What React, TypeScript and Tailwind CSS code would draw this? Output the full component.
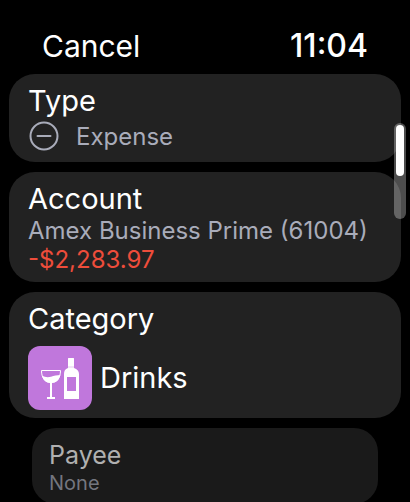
import type { ReactNode } from "react";

type FieldCardProps = {
  title: string;
  children: ReactNode;
};

function FieldCard({ title, children }: FieldCardProps) {
  return (
    <button
      type="button"
      className="block w-full rounded-[26px] bg-[#222222] px-[19px] pt-[10px] pb-2 text-left"
    >
      <span className="block text-[29px] leading-[34px] text-white">{title}</span>
      {children}
    </button>
  );
}

function ExpenseIcon() {
  return (
    <svg className="h-8 w-8 shrink-0" viewBox="0 0 32 32" fill="none" stroke="currentColor" strokeWidth="2" aria-hidden="true">
      <circle cx="16" cy="16" r="13.5" />
      <path d="M9.5 16h13" strokeLinecap="round" />
    </svg>
  );
}

function DrinksIcon() {
  return (
    <svg className="h-16 w-16 shrink-0 rounded-xl bg-[#c077dc]" viewBox="0 0 64 64" fill="white" aria-hidden="true">
      {/* glass */}
      <path d="M13.5 24.5h19c0 7.5-3.5 12-9.5 12s-9.5-4.5-9.5-12z" fill="none" stroke="white" />
      <path d="M14 29.5c3 1.8 6 2 9 1.2 3-.8 6-1.7 9.3-1.7-1 5-4 8-9.3 8s-8-3-9-7.5z" />
      <path d="M22 36h2v15h3v2h-8v-2h3z" />
      {/* bottle */}
      <path d="M40.500 12h5a.5.5 0 0 1 .5.5V20h-6v-7.5a.5.5 0 0 1 .5-.5z" />
      <path d="M40 20h6v2h-6z" fillOpacity="0.8" />
      <path fillRule="evenodd" d="M40 22h6c3 1 5 3 5 6v25H36V28c0-3 1-5 4-6zM39 31v14h9V31z" />
    </svg>
  );
}

export default function App() {
  return (
    <div className="relative h-screen overflow-hidden bg-black font-['Inter',sans-serif] text-white">
      <header className="flex h-[74px] items-end justify-between px-[42px] pb-2">
        <button type="button" className="text-[30px] leading-10">
          Cancel
        </button>
        <time className="text-[32px] leading-10 font-medium">11:04</time>
      </header>

      <main className="flex flex-col gap-[10px] px-[9px]">
        <FieldCard title="Type">
          <span className="flex h-9 items-center gap-4 text-[24px] leading-[29px] text-[#a9acba]">
            <ExpenseIcon />
            Expense
          </span>
        </FieldCard>

        <FieldCard title="Account">
          <span className="block text-[24px] leading-[29px] text-[#a9acba]">Amex Business Prime (61004)</span>
          <span className="block text-[24px] leading-[29px] text-[#ee4d3b]">-$2,283.97</span>
        </FieldCard>

        <FieldCard title="Category">
          <span className="mt-[10px] flex items-center gap-2 text-[29px] leading-[34px]">
            <DrinksIcon />
            Drinks
          </span>
        </FieldCard>

        {/* next row, shrunk while it scrolls in */}
        <button
          type="button"
          className="mx-[23px] rounded-3xl bg-[#1a1a1a] px-[17px] pt-3 pb-2 text-left"
        >
          <span className="block text-[25px] leading-[30px] text-[#b0b0b0]">Payee</span>
          <span className="block text-[20px] leading-[26px] text-[#74767f]">None</span>
        </button>
      </main>

      <div className="absolute top-[123px] right-1 h-24 w-3 rounded-full bg-white/30 p-0.5">
        <div className="h-[51px] rounded-full bg-white" />
      </div>
    </div>
  );
}
